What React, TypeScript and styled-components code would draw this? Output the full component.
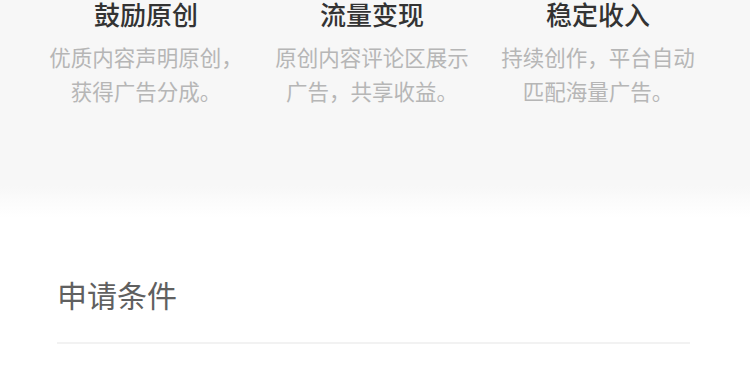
import styled, { createGlobalStyle } from 'styled-components';

const features = [
  { title: '鼓励原创', desc: '优质内容声明原创，获得广告分成。' },
  { title: '流量变现', desc: '原创内容评论区展示广告，共享收益。' },
  { title: '稳定收入', desc: '持续创作，平台自动匹配海量广告。' },
];

const GlobalStyle = createGlobalStyle`
  html, body {
    margin: 0;
    padding: 0;
    background: #ffffff;
    font-family: "Noto Sans CJK SC", "Noto Sans", sans-serif;
  }
`;

function App() {
  return (
    <Page>
      <GlobalStyle />
      <Hero>
        <FeatureRow>
          {features.map((feature, index) => (
            <Feature key={`feature-${index}`}>
              <FeatureTitle>{feature.title}</FeatureTitle>
              <FeatureDesc>{feature.desc}</FeatureDesc>
            </Feature>
          ))}
        </FeatureRow>
      </Hero>
      <Section>
        <SectionTitle>申请条件</SectionTitle>
        <Divider />
      </Section>
    </Page>
  );
}

export default App;

const Page = styled.div`
  width: 750px;
  height: 376px;
  overflow: hidden;
  background: #ffffff;
`;

const Hero = styled.div`
  height: 218px;
  background: linear-gradient(
    to bottom,
    #f7f7f7 0px,
    #f7f7f7 186px,
    #fbfbfb 200px,
    #ffffff 218px
  );
`;

const FeatureRow = styled.div`
  display: grid;
  grid-template-columns: repeat(3, 226px);
  padding-left: 33px;
`;

const Feature = styled.div`
  display: flex;
  flex-direction: column;
  align-items: center;
  text-align: center;
`;

const FeatureTitle = styled.h3`
  margin: 0;
  font-size: 26px;
  line-height: 27px;
  font-weight: 500;
  color: #333333;
`;

const FeatureDesc = styled.p`
  margin: 13px 0 0;
  max-width: 210px;
  font-size: 21.5px;
  line-height: 34px;
  color: #b6b6b6;
`;

const Section = styled.div`
  padding: 0 60px 0 57px;
`;

const SectionTitle = styled.h2`
  margin: 0;
  padding-top: 58px;
  font-size: 30px;
  line-height: 36px;
  font-weight: 400;
  color: #606060;
`;

const Divider = styled.div`
  margin-top: 30px;
  height: 2px;
  background: #f2f2f2;
`;
